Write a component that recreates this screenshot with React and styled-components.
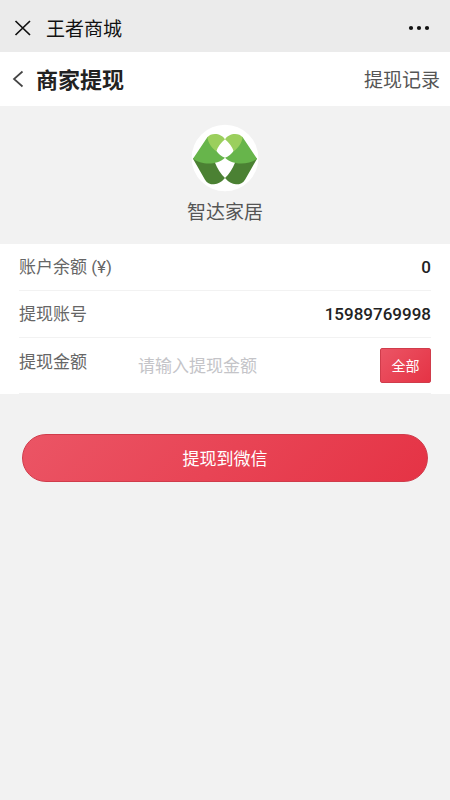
import React, { useState } from 'react';
import styled, { createGlobalStyle } from 'styled-components';

const GlobalStyle = createGlobalStyle`
    * {
        box-sizing: border-box;
    }

    body {
        margin: 0;
        background: #f2f2f2;
        color: #222;
        font-family: Roboto, 'Noto Sans CJK SC', sans-serif;
    }

    button,
    input {
        font-family: inherit;
    }
`;

const TitleBar = styled.header`
    display: flex;
    align-items: center;
    height: 52px;
    padding: 4px 20px 0 14px;
    background: #ebebeb;
`;

const AppName = styled.span`
    flex: 1;
    margin-left: 14px;
    padding-top: 4px;
    font-size: 19px;
    line-height: 28px;
    color: #111;
`;

const IconButton = styled.button`
    display: flex;
    padding: 0;
    border: 0;
    background: none;
    color: ${props => props.$color || '#111'};
`;

const NavBar = styled.nav`
    display: flex;
    align-items: center;
    height: 54px;
    padding: 0 10px;
    background: #fff;
`;

const PageTitle = styled.h1`
    flex: 1;
    margin: 0 0 0 10px;
    padding-top: 4px;
    font-size: 22px;
    line-height: 28px;
    font-weight: 700;
`;

const RecordLink = styled.a`
    padding-top: 4px;
    font-size: 19px;
    line-height: 28px;
    color: #555;
    text-decoration: none;
`;

const Shop = styled.section`
    display: flex;
    flex-direction: column;
    align-items: center;
    gap: 7px;
    padding: 18px 0 17px;
`;

const ShopName = styled.div`
    font-size: 19px;
    line-height: 28px;
    color: #555;
`;

const Panel = styled.div`
    padding: 0 19px;
    background: #fff;
`;

const Row = styled.div`
    display: flex;
    align-items: center;
    height: ${props => (props.$tall ? '56px' : '47px')};
    border-bottom: 1px solid #f2f2f2;
`;

const Label = styled.label`
    width: 119px;
    font-size: 17px;
    line-height: 24px;
    color: #666;
    align-self: ${props => (props.$top ? 'flex-start' : 'auto')};
    padding-top: ${props => (props.$top ? '12px' : '0')};
`;

const Value = styled.output`
    flex: 1;
    text-align: right;
    font-size: 17px;
    line-height: 24px;
    font-weight: 500;
`;

const AmountInput = styled.input`
    flex: 1;
    min-width: 0;
    padding: 0;
    border: 0;
    outline: 0;
    background: none;
    font-size: 17px;
    line-height: 24px;
    color: #222;

    &::placeholder {
        color: #c4c4c8;
    }
`;

const RedButton = styled.button`
    padding: 0 0 2px;
    border: 1px solid #d03c4b;
    background: linear-gradient(135deg, #eb5565, #e53345);
    color: #fff;
`;

const AllButton = styled(RedButton)`
    width: 51px;
    height: 35px;
    border-radius: 2px;
    font-size: 14px;
`;

const Actions = styled.div`
    padding: 40px 22px;
`;

const SubmitButton = styled(RedButton)`
    display: block;
    width: 100%;
    height: 48px;
    border-radius: 24px;
    font-size: 17px;
`;

const ShopLogo = () => (
    <svg width='68' height='68' viewBox='0 0 204 204' role='img' aria-label='智达家居'>
        <circle cx='102' cy='102' r='100' fill='#fff' />
        <g id='half'>
            <path d='M20 92 L6 104 L42 167 Q50 181 69 181 Q87 180 102 162 Q84 146 71 114 Z' fill='#4b8133' />
            <path d='M50 38 L6 104 C28 121 74 127 102 101 Q88 98 74 78 Z' fill='#67b54b' />
            <path d='M102 46 C92 27 60 24 49 40 C52 58 62 72 76 82 Q82 63 102 46 Z' fill='#9bcf5d' />
        </g>
        <use href='#half' transform='translate(204 0) scale(-1 1)' />
    </svg>
);

const App = () => {
    const [amount, setAmount] = useState('');
    const balance = '0';

    return (
        <>
            <GlobalStyle />
            <TitleBar>
                <IconButton type='button' aria-label='关闭'>
                    <svg width='18' height='18' viewBox='0 0 18 18' fill='none' stroke='currentColor' strokeWidth='1.7'>
                        <path d='M1.5 2 L16 16 M16 2 L1.5 16' />
                    </svg>
                </IconButton>
                <AppName>王者商城</AppName>
                <IconButton type='button' aria-label='更多'>
                    <svg width='22' height='6' viewBox='0 0 22 6' fill='currentColor'>
                        <circle cx='3' cy='3' r='2.1' />
                        <circle cx='11' cy='3' r='2.1' />
                        <circle cx='19' cy='3' r='2.1' />
                    </svg>
                </IconButton>
            </TitleBar>
            <NavBar>
                <IconButton type='button' aria-label='返回' $color='#444'>
                    <svg width='16' height='18' viewBox='0 0 16 18' fill='none' stroke='currentColor' strokeWidth='1.7'>
                        <path d='M12.5 1.5 L4 9 L12.5 16.5' />
                    </svg>
                </IconButton>
                <PageTitle>商家提现</PageTitle>
                <RecordLink href='#records'>提现记录</RecordLink>
            </NavBar>
            <main>
                <Shop>
                    <ShopLogo />
                    <ShopName>智达家居</ShopName>
                </Shop>
                <Panel>
                    <Row>
                        <Label htmlFor='balance'>账户余额 (¥)</Label>
                        <Value id='balance'>{balance}</Value>
                    </Row>
                    <Row>
                        <Label htmlFor='account'>提现账号</Label>
                        <Value id='account'>15989769998</Value>
                    </Row>
                    <Row $tall>
                        <Label htmlFor='amount' $top>提现金额</Label>
                        <AmountInput
                            id='amount'
                            type='text'
                            inputMode='decimal'
                            placeholder='请输入提现金额'
                            value={amount}
                            onChange={e => setAmount(e.target.value)}
                        />
                        <AllButton type='button' onClick={() => setAmount(balance)}>全部</AllButton>
                    </Row>
                </Panel>
                <Actions>
                    <SubmitButton type='button'>提现到微信</SubmitButton>
                </Actions>
            </main>
        </>
    );
};

export default App;
